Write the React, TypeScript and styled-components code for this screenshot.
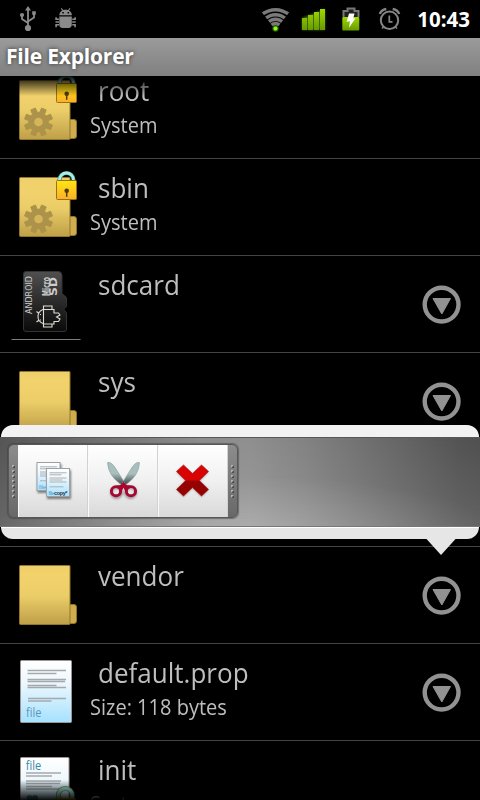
import React from "react";
import styled, { createGlobalStyle } from "styled-components";

const Global = createGlobalStyle`
  html, body { margin: 0; padding: 0; background: #000; }
  body { font-family: "Open Sans", "Noto Sans", sans-serif; }
  svg { display: block; flex: none; }
`;

const Screen = styled.div`
  position: relative;
  width: 480px;
  height: 800px;
  overflow: hidden;
  background: #000;
  display: flex;
  flex-direction: column;
`;

const StatusBar = styled.header`
  flex: none;
  height: 38px;
  display: flex;
  align-items: flex-start;
  justify-content: space-between;
  padding: 0 10px 0 17px;
`;

const StatusGroup = styled.div<{ $gap?: number }>`
  display: flex;
  gap: ${(p) => p.$gap ?? 0}px;
`;

const Clock = styled.time`
  width: 60px;
  font-weight: 700;
  font-size: 20.5px;
  line-height: 39px;
  color: #fff;
  text-align: right;
  white-space: nowrap;
`;

const TitleBar = styled.h1`
  flex: none;
  margin: 0;
  height: 38px;
  box-sizing: border-box;
  padding-left: 6px;
  background: linear-gradient(#9b9b9b, #808080);
  color: #fff;
  font-weight: 700;
  font-size: 21px;
  line-height: 36px;
  letter-spacing: -0.2px;
  text-shadow: 0 0 4px #333;
`;

const Viewport = styled.main`
  position: relative;
  flex: 1;
  min-height: 0;
  overflow: hidden;
`;

const List = styled.ul`
  list-style: none;
  margin: -14px 0 0;
  padding: 0;
`;

const Row = styled.li`
  display: flex;
  height: 96px;
  border-bottom: 1px solid #444;
`;

const Labels = styled.div`
  flex: 1;
  padding-top: 11px;
  color: #bebebe;
  white-space: nowrap;
`;

const Name = styled.div`
  margin-left: 8px;
  font-size: 27px;
  line-height: 36px;
  transform: scaleX(0.964);
  transform-origin: 0 0;
`;

const Detail = styled.div`
  margin-top: 2px;
  font-size: 21.3px;
  line-height: 28px;
  transform: scaleX(0.94);
  transform-origin: 0 0;
`;

const Fade = styled.div<{ $edge: "top" | "bottom" }>`
  position: absolute;
  left: 0;
  right: 0;
  ${(p) => p.$edge}: 0;
  height: 20px;
  background: linear-gradient(
    to ${(p) => p.$edge},
    rgba(0, 0, 0, 0),
    rgba(0, 0, 0, 0.95)
  );
`;

const Popup = styled.section`
  position: absolute;
  left: 0;
  top: 425px;
  width: 480px;
`;

const Cap = styled.div<{ $edge: "top" | "bottom" }>`
  box-sizing: border-box;
  height: 12px;
  margin: 0 1px;
  background: ${(p) => (p.$edge === "top" ? "#f2f2f2" : "#e6e6e6")};
  border-radius: ${(p) => (p.$edge === "top" ? "12px 12px 0 0" : "0 0 12px 12px")};
  border-top: ${(p) => (p.$edge === "bottom" ? "1px solid #fff" : "none")};
`;

const Band = styled.div`
  box-sizing: border-box;
  height: 90px;
  padding: 6px 8px;
  border-top: 1px solid #575757;
  border-bottom: 1px solid #777;
  background:
    radial-gradient(ellipse 260px 60px at 245px 98px, rgba(255, 255, 255, 0.2), rgba(255, 255, 255, 0)),
    linear-gradient(rgba(255, 255, 255, 0), rgba(255, 255, 255, 0.1)),
    linear-gradient(90deg, #555 0, #8d8d8d 200px, #8f8f8f 250px, #828282 305px, #535353 460px, #505050 480px);
`;

const Toolbar = styled.div`
  box-sizing: border-box;
  width: 230px;
  height: 74px;
  display: flex;
  border: 1px solid #575757;
  border-radius: 6px;
  background: linear-gradient(#8c8c8c, #686868);
  box-shadow: 0 0 1px 0.5px rgba(60, 60, 60, 0.5);
  overflow: hidden;
`;

const Grip = styled.div`
  width: 9px;
  display: flex;
  flex-direction: column;
  align-items: center;
  justify-content: center;
  gap: 2px;
`;

const GripDot = styled.i`
  width: 3px;
  height: 3px;
  background: linear-gradient(135deg, #b4b4b4 35%, #4d4d4d 65%);
`;

const Action = styled.button`
  box-sizing: border-box;
  width: 70px;
  height: 72px;
  padding: 0;
  border: 0;
  border-right: 1px solid #d2d2d2;
  border-left: 1px solid #fafafa;
  background: linear-gradient(#fff, #f0f0f0 50%, #d9d9d9);
  display: flex;
  align-items: center;
  justify-content: center;
`;

const Pointer = styled.svg`
  margin-left: 426px;
`;

const G = "#8a8a8a";

const UsbIcon = () => (
  <svg width="22" height="38" viewBox="17 0 22 38" fill={G} stroke={G}>
    <path d="M28 28V9M28 23L22 19V15M28 21.5L34 17.5V13.5" fill="none" strokeWidth="1.8" />
    <path d="M28 6l3 4.5h-6zM32.2 11.2h3.6v3.6h-3.6z" stroke="none" />
    <circle cx="22" cy="15" r="2.1" stroke="none" />
    <circle cx="28" cy="28" r="3.1" stroke="none" />
  </svg>
);

const BugIcon = () => (
  <svg width="22" height="38" viewBox="55 0 22 38" fill={G}>
    <path d="M59.3 15.2C59.5 11.8 62 9.8 65.5 9.8s6.200 2 6.400 5.400z" />
    <path d="M61.300 8.300l2 2.700M70 8.300l-2 2.700" stroke={G} strokeWidth="1.100" />
    <path d="M59.300 16.400h12.500v8.200q0 3.400-3.400 3.400h-5.700q-3.400 0-3.400-3.400z" />
    <path d="M59 19.200h-2.900v-2M59 22h-3.500M59 24.700h-2.900v2.500M72.200 19.200h2.900v-2M72.200 22h3.500M72.200 24.700h2.900v2.500" fill="none" stroke={G} strokeWidth="1.600" />
    <path d="M62.300 12h1.500v1.500h-1.500zM67.600 12h1.500v1.500h-1.500z" fill="#000" />
  </svg>
);

const WifiIcon = () => (
  <svg width="34" height="38" viewBox="261 0 34 38" fill="none" stroke="#797979">
    <defs>
      <radialGradient id="dotGlow">
        <stop offset=".35" stopColor="#8cff10" />
        <stop offset="1" stopColor="#2c7000" stopOpacity="0" />
      </radialGradient>
      <clipPath id="wifiWedge"><path d="M260 10L275.500 30 291 10V0H260z" /></clipPath>
    </defs>
    <g clipPath="url(#wifiWedge)" strokeWidth="3.500">
      <path d="M261 15Q275.500 4.500 290 15" />
      <path d="M264 19.500Q275.500 10 287 19.500" />
      <path d="M267 23Q275.500 15.500 284 23" />
      <path d="M270 26.300Q275.500 20.500 281 26.300" />
    </g>
    <circle cx="275.500" cy="28.500" r="4" fill="url(#dotGlow)" stroke="none" />
  </svg>
);

const SignalIcon = () => (
  <svg width="40" height="38" viewBox="295 0 40 38">
    <defs>
      <linearGradient id="lime" x2="0" y2="1">
        <stop stopColor="#a0d800" /><stop offset="1" stopColor="#659b00" />
      </linearGradient>
      <filter id="limeGlow" x="-.2" y="-.2" width="1.400" height="1.400"><feGaussianBlur stdDeviation="1.300" /></filter>
    </defs>
    <path d="M302 18l23-9v21h-23z" fill="#416800" filter="url(#limeGlow)" />
    <path d="M302 18h5v12h-5zM308 15h5v15h-5zM314 12h5v18h-5zM320 9h5v21h-5z" fill="url(#lime)" />
  </svg>
);

const BatteryIcon = () => (
  <svg width="35" height="38" viewBox="335 0 35 38">
    <path d="M343.500 17V11h4V8.500h7V11h4v6" fill="#222" stroke="#777" strokeWidth="2" />
    <rect x="342.300" y="17" width="17" height="13.500" rx="1" fill="url(#lime)" />
    <path d="M349 13.500h5.500l-1.300 5 2.300-.3-6.500 9.500 1-6.500-3.300.5z" fill="#fff" />
  </svg>
);

const AlarmIcon = () => (
  <svg width="40" height="38" viewBox="370 0 40 38" fill="none" stroke="#858585">
    <circle cx="389.500" cy="20.300" r="8.700" strokeWidth="2" />
    <path d="M389.300 15.500v6.300h3.200" strokeWidth="1.700" />
    <path d="M379.800 14Q381 10 386.300 9M399.200 14Q398 10 392.700 9" strokeWidth="2.300" />
    <path d="M383.500 27l-1.500 1.500M395.500 27l1.500 1.500" strokeWidth="1.500" />
  </svg>
);

/* Row artwork shares a canvas whose origin is the row's top-left corner. */
const Defs = () => (
  <svg width="0" height="0">
    <defs>
      <linearGradient id="folder" x2="0" y2="1">
        <stop stopColor="#edcf6b" /><stop offset=".15" stopColor="#f2d26b" />
        <stop offset=".5" stopColor="#ecce69" /><stop offset="1" stopColor="#bf9f48" />
      </linearGradient>
      <linearGradient id="lock" x2="0" y2="1">
        <stop stopColor="#ffe711" /><stop offset="1" stopColor="#fcae28" />
      </linearGradient>
      <linearGradient id="paper" x2="0" y2="1">
        <stop stopColor="#fff" /><stop offset=".35" stopColor="#eef8fd" /><stop offset="1" stopColor="#a5e1ff" />
      </linearGradient>
      <linearGradient id="card" x2="0" y2="1">
        <stop stopColor="#505050" /><stop offset=".6" stopColor="#242424" /><stop offset="1" stopColor="#0a0a0a" />
      </linearGradient>
    </defs>
  </svg>
);

const Lock = () => (
  <g>
    <path d="M59.500 22v-1a7 7 0 0 1 14 0v1" fill="none" stroke="#3a7d7b" strokeWidth="4.200" />
    <path d="M59.500 22v-1a7 7 0 0 1 14 0v1" fill="none" stroke="#a8eee7" strokeWidth="2.800" />
    <rect x="56.500" y="21.500" width="20" height="19" rx="1" fill="url(#lock)" stroke="#99701a" />
    <circle cx="66.700" cy="31.700" r="2.300" fill="#4f3c10" />
    <path d="M66.700 31v6.800" stroke="#4f3c10" strokeWidth="1.500" />
  </g>
);

const gear = Array.from({ length: 8 }, (_, i) => {
  const at = (deg: number, r: number) => {
    const a = ((i * 45 + 22.5 + deg) * Math.PI) / 180;
    return `${(38.5 + r * Math.cos(a)).toFixed(2)},${(60 + r * Math.sin(a)).toFixed(2)}`;
  };
  return [at(-15, 9.8), at(-10, 14.3), at(10, 14.3), at(15, 9.8)].join(" ");
}).join(" ");

const FolderIcon = ({ system = false }: { system?: boolean }) => (
  <svg width="90" height="96" viewBox="0 0 90 96">
    <rect x="67" y="57.500" width="9.500" height="19" rx="2.500" fill="#cfad4f" stroke="#8d7328" />
    <rect x="19.500" y="18.500" width="50.500" height="59" rx="1" fill="url(#folder)" stroke="#92772b" />
    {system && (
      <g>
        <polygon points={gear} fill="#ad924a" strokeLinejoin="round" stroke="#ad924a" />
        <circle cx="38.500" cy="60" r="4.300" fill="#d5b55a" />
        <Lock />
      </g>
    )}
  </svg>
);

const CardIcon = () => (
  <svg width="90" height="96" viewBox="0 0 90 96">
    <path d="M26 15.500h32q4 0 4 4v18l4.500 4v9l-3 2.500 3 4v16q0 2.500-2.500 2.500H26q-2.500 0-2.500-2.500V18q0-2.500 2.500-2.500z" fill="url(#card)" stroke="#333" />
    <g fill="#ccc" fontFamily="DejaVu Sans, sans-serif">
      <text transform="translate(31.700 58) rotate(-90)" fontSize="8" textLength="38" lengthAdjust="spacing">ANDROID</text>
      <text transform="translate(49.500 40) rotate(-90)" fontSize="10" fontWeight="700" textLength="19" lengthAdjust="spacingAndGlyphs">Micro</text>
      <text transform="translate(57 40) rotate(-90)" fontSize="10" fontWeight="700" textLength="19" lengthAdjust="spacingAndGlyphs">SD</text>
    </g>
    <g fill="none" stroke="#deded4" strokeWidth="1.100">
      <path d="M43.500 53.500h10.500v3.500h4.500l1.500 2-3.500 2 3.500 2-1.500 2.500h-4.500v2.500H43.500z" />
      <path d="M43 53.500q-5 2-5 7t5 7M43.500 53v-3h8.500v3M43.500 68v3h8.500v-3M38.500 57l-2-1.500M38.500 64.500l-2 1.500" />
    </g>
    <path d="M40 58h1v1h-1zM40 63.500h1v1h-1z" fill="#ddd" />
    <path d="M11.500 83.500h69" stroke="#7b7d7c" />
  </svg>
);

const FileIcon = () => (
  <svg width="90" height="96" viewBox="0 0 90 96">
    <rect x="20.500" y="16.500" width="51" height="62" rx="1" fill="url(#paper)" stroke="#9d9595" />
    <path d="M27.500 26.500h38.500M27.500 29.500h29M27.500 35.500h38.500M27.500 37.500h37.500M27.500 41.500h29M27.500 43.500h38.500M28 54.500h38M28 57h23.500" stroke="#a5a9ad" strokeWidth="1.300" />
    <text x="26" y="73.300" fontSize="12" textLength="15.500" lengthAdjust="spacingAndGlyphs" fill="#5898b9">file</text>
  </svg>
);

const LockedFileIcon = () => (
  <svg width="90" height="96" viewBox="0 0 90 96">
    <rect x="20.500" y="16.500" width="48.500" height="62" rx="1" fill="url(#paper)" stroke="#9d9595" />
    <path d="M26 32h35M26 35h26M26 40h35M26 42.500h34M26 45.500h26M26 48h35" stroke="#a5a9ad" strokeWidth="1.300" />
    <text x="25.800" y="29" fontSize="12" textLength="15.500" lengthAdjust="spacingAndGlyphs" fill="#3c86a8">file</text>
    <circle cx="29.500" cy="57" r="3" fill="#4e8299" /><circle cx="35" cy="57" r="3" fill="#4e8299" />
    <circle cx="65.300" cy="54.500" r="7" fill="none" stroke="#8a7a35" strokeWidth="5" />
    <circle cx="65.300" cy="54.500" r="7" fill="none" stroke="#8ce6dd" strokeWidth="3.500" />
    <rect x="55.500" y="57" width="20" height="20" fill="url(#lock)" />
  </svg>
);

const MoreIcon = () => (
  <svg width="60" height="96" viewBox="420 0 60 96">
    <circle cx="441.600" cy="48.600" r="16.900" fill="none" stroke="#929292" strokeWidth="4.400" />
    <path d="M433 42.500h17.500l-8.700 15.500z" fill="#929292" stroke="#929292" strokeLinejoin="round" />
  </svg>
);

const Sheet = ({ x, y }: { x: number; y: number }) => (
  <g transform={`translate(${x} ${y})`}>
    <rect x="1" y="2" width="24" height="29" fill="#333" opacity=".6" filter="url(#soft)" />
    <rect x=".5" y=".5" width="23" height="28" fill="url(#paper)" stroke="#9ba1a5" />
    <path d="M3.500 4.800h17M3.500 6.800h12M3.500 10h17M3.500 12h13M3.500 14h17M3.500 18.800h14" stroke="#acb0b3" />
  </g>
);

const CopyIcon = () => (
  <svg width="40" height="42" viewBox="33 460 40 42">
    <defs><filter id="soft" x="-.3" y="-.3" width="1.600" height="1.600"><feGaussianBlur stdDeviation="1.100" /></filter></defs>
    <Sheet x={36.5} y={462} />
    <text x="39" y="489" fontSize="5.500" fill="#579bc0">file</text>
    <Sheet x={46} y={468} />
    <text x="48.500" y="494.500" fontSize="5.500" textLength="19" fill="#4b9bc4">file<tspan fill="#334" fontWeight="600">copy*</tspan></text>
  </svg>
);

const CutIcon = () => (
  <svg width="40" height="42" viewBox="103 460 40 42">
    <defs>
      <linearGradient id="blade" x2="0" y2="1">
        <stop offset=".5" stopColor="#a9bfbd" /><stop offset="1" stopColor="#344644" />
      </linearGradient>
    </defs>
    <g filter="url(#soft)" opacity=".35" transform="translate(0 1.500)">
      <path d="M108 462l14 23 3-3zM139 462l-14 23-3-3z" />
      <circle cx="116.500" cy="491" r="5" fill="none" stroke="#000" strokeWidth="3" /><circle cx="130.500" cy="491" r="5" fill="none" stroke="#000" strokeWidth="3" />
    </g>
    <path d="M107.500 462.500q4-1.500 9.500 8l8 13-3 1.500q-14-9-14.500-22.500zM139.500 462.500q-4-1.500-9.500 8l-8 13 3 1.500q14-9 14.500-22.500z" fill="url(#blade)" stroke="#8ca3a1" strokeWidth=".6" />
    <path d="M117 486.500q4.500 1.500 6.500-2.200 2 3.700 6.500 2.200" fill="none" stroke="#a70631" strokeWidth="3.200" />
    <path d="M123.500 485l-2.800 5.500M123.500 485l2.800 5.500" stroke="#a70631" strokeWidth="2.500" />
    <circle cx="116" cy="491.200" r="4.600" fill="none" stroke="#a70631" strokeWidth="2.900" />
    <circle cx="131" cy="491.200" r="4.600" fill="none" stroke="#a70631" strokeWidth="2.900" />
  </svg>
);

const DeleteIcon = () => (
  <svg width="40" height="42" viewBox="173 460 40 42">
    <defs>
      <linearGradient id="cross" x2="0" y2="1">
        <stop offset=".47" stopColor="#d90303" /><stop offset=".54" stopColor="#940202" />
      </linearGradient>
    </defs>
    <path d="M183.500 466l9 8.500 9-8.500 7 6-9 9 9 8.500-7 7-9-8.500-9 8.500-7-7 9-8.500-9-9z" filter="url(#soft)" opacity=".4" />
    <path d="M183.500 465l9 8.500 9-8.500 7 6.500-9.200 9 9.200 9-7 6.500-9-8.500-9 8.500-7-6.500 9.200-9-9.200-9z" fill="url(#cross)" stroke="#ab1111" strokeWidth=".6" />
  </svg>
);

type Entry = {
  name: string;
  detail?: string;
  icon: React.ReactNode;
  menu?: boolean;
};

const entries: Entry[] = [
  { name: "root", detail: "System", icon: <FolderIcon system /> },
  { name: "sbin", detail: "System", icon: <FolderIcon system /> },
  { name: "sdcard", icon: <CardIcon />, menu: true },
  { name: "sys", icon: <FolderIcon />, menu: true },
  { name: "", icon: <FolderIcon />, menu: true },
  { name: "vendor", icon: <FolderIcon />, menu: true },
  { name: "default.prop", detail: "Size: 118 bytes", icon: <FileIcon />, menu: true },
  { name: "init", detail: "System", icon: <LockedFileIcon /> },
];

const DragGrip = () => (
  <Grip>
    {Array.from({ length: 7 }, (_, i) => (
      <GripDot key={i} />
    ))}
  </Grip>
);

export default function App() {
  return (
    <Screen>
      <Global />
      <StatusBar>
        <StatusGroup $gap={16}>
          <UsbIcon />
          <BugIcon />
        </StatusGroup>
        <StatusGroup>
          <WifiIcon />
          <SignalIcon />
          <BatteryIcon />
          <AlarmIcon />
          <Clock>10:43</Clock>
        </StatusGroup>
      </StatusBar>
      <TitleBar>File Explorer</TitleBar>
      <Viewport>
        <List>
          {entries.map((e) => (
            <Row key={e.name}>
              {e.icon}
              <Labels>
                <Name>{e.name}</Name>
                {e.detail && <Detail>{e.detail}</Detail>}
              </Labels>
              {e.menu && <MoreIcon />}
            </Row>
          ))}
        </List>
        <Fade $edge="top" />
        <Fade $edge="bottom" />
      </Viewport>
      <Popup>
        <Cap $edge="top" />
        <Band>
          <Toolbar>
            <DragGrip />
            <Action aria-label="Copy"><CopyIcon /></Action>
            <Action aria-label="Cut"><CutIcon /></Action>
            <Action aria-label="Delete"><DeleteIcon /></Action>
            <DragGrip />
          </Toolbar>
        </Band>
        <Cap $edge="bottom" />
        <Pointer width="30" height="16" viewBox="426 0 30 16">
          <path d="M426.500 0h29l-14.500 16z" fill="#e6e6e6" />
        </Pointer>
      </Popup>
      <Defs />
    </Screen>
  );
}
